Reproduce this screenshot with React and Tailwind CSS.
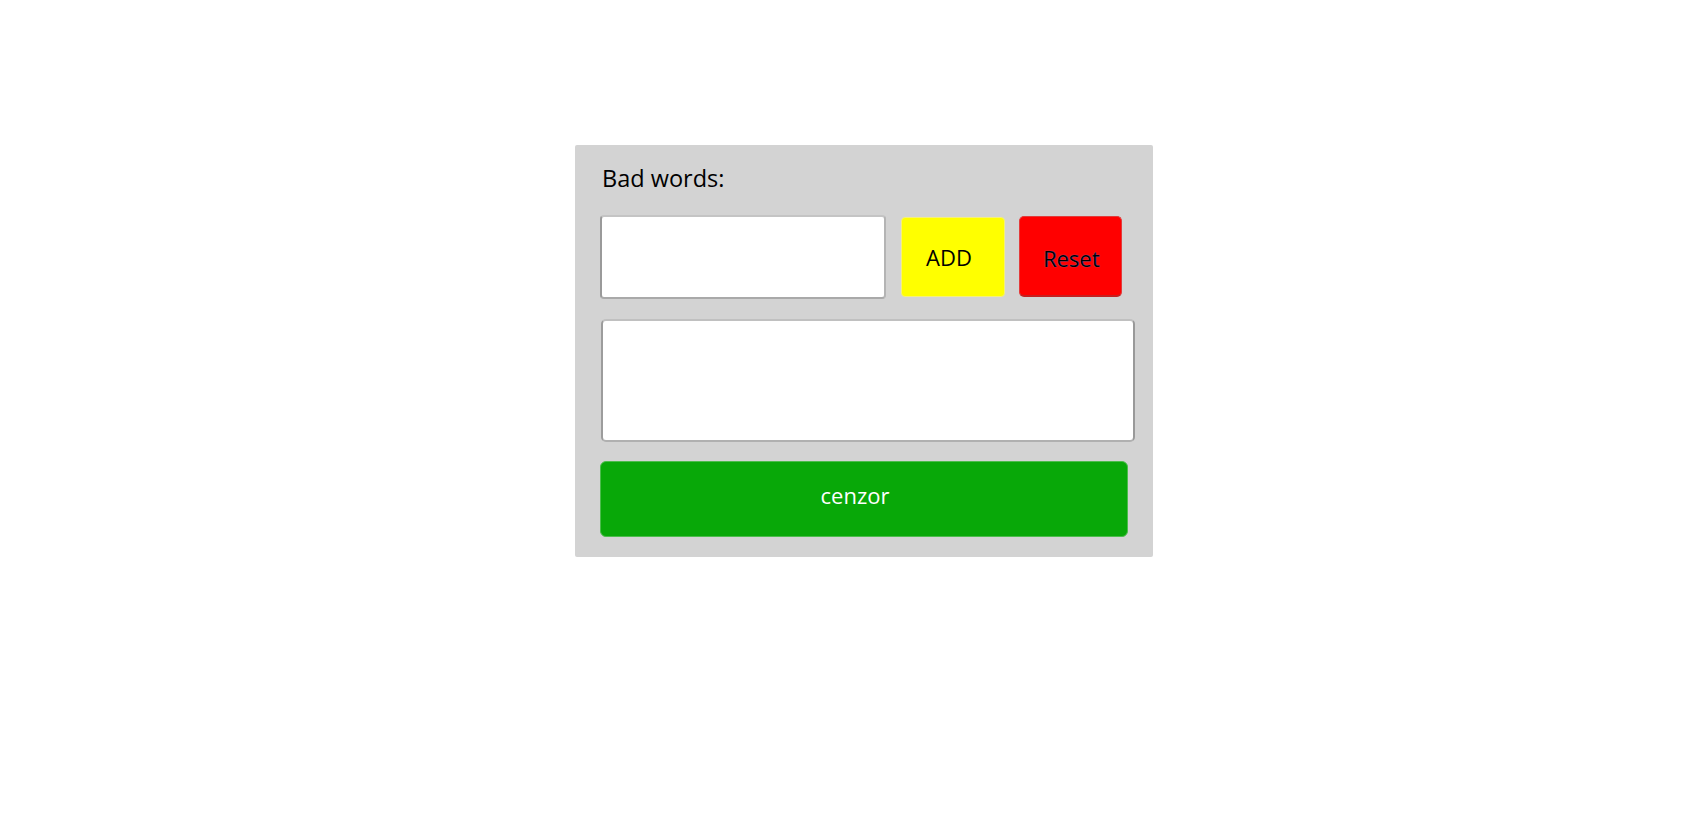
import { useState } from "react";

const App = () => {
  const [word, setWord] = useState("");
  const [text, setText] = useState("");

  return (
    <div className="min-h-screen bg-white pt-[145px] pl-[575px] font-['Open_Sans',sans-serif]">
      <div className="w-[578px] bg-[#d3d3d3] rounded-[2px] pt-[18px] pl-[25px] pb-[20px]">
        {/* Label */}
        <div className="h-[30px] pl-[2px] leading-[30px] text-[23.5px] text-black">Bad words:</div>

        {/* Input row */}
        <div className="mt-[22px] flex items-end">
          <input
            type="text"
            value={word}
            onChange={(e) => setWord(e.target.value)}
            className="w-[286px] h-[84px] bg-white rounded-[4px] border-2 border-t-[#c4c4c4] border-l-[#9a9a9a] border-b-[#a9a9a9] border-r-[#b4b4b4] outline-none px-2 text-[22px]"
          />
          <button className="ml-[15px] mb-[2px] w-[104px] h-[80px] bg-[#ffff00] rounded-[4px] border border-[#f4f07a] pr-[8px] text-[22px] text-black">
            ADD
          </button>
          <button className="ml-[14px] mb-[2px] w-[103px] h-[81px] bg-[#ff0000] rounded-[5px] border border-[#e23b3b] border-b-2 border-b-[#c42020] pt-[4px] pl-[2px] text-[22px] text-black [text-shadow:0_0_1px_#5aa0ff]">
            Reset
          </button>
        </div>

        {/* Text area */}
        <textarea
          value={text}
          onChange={(e) => setText(e.target.value)}
          className="block mt-[20px] ml-[1px] w-[534px] h-[123px] resize-none bg-white rounded-[5px] border-2 border-t-[#c0c0c0] border-l-[#9c9c9c] border-b-[#b0b0b0] border-r-[#999999] outline-none p-2 text-[22px]"
        />

        {/* Censor button */}
        <button className="mt-[19px] w-[528px] h-[76px] bg-[#08a808] rounded-[6px] border border-[#4cbc4c] pr-[18px] pb-[8px] text-[22px] text-white">
          cenzor
        </button>
      </div>
    </div>
  );
};

export default App;
